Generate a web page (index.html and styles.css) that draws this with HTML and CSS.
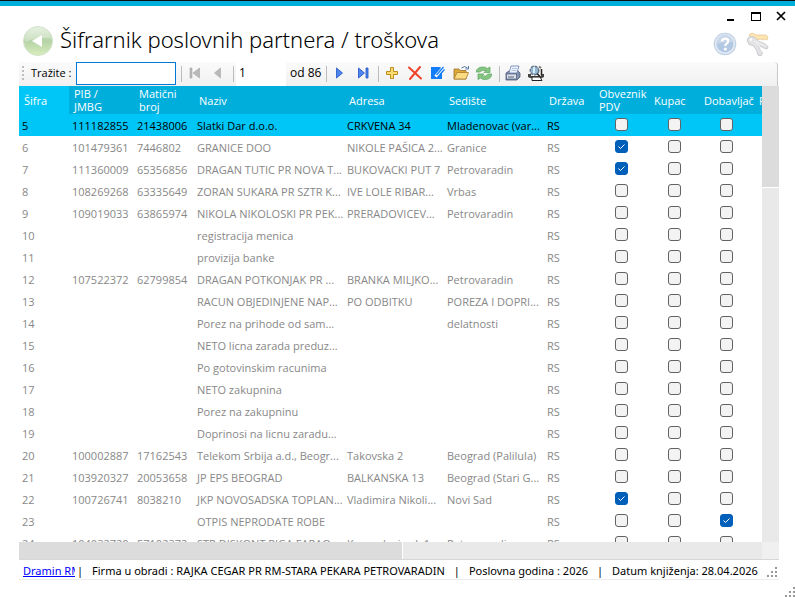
FILE: index.html
```html
<!DOCTYPE html>
<html lang="sr-Latn">

<head>
    <meta charset="UTF-8">
    <meta name="viewport" content="width=device-width, initial-scale=1.0">
    <title>Šifrarnik poslovnih partnera / troškova</title>
    <link rel="stylesheet" href="styles.css">
</head>

<body>
    <header class="title-bar">
        <button class="icon-button back" aria-label="Nazad">
            <svg width="32" height="32" viewBox="0 0 32 32">
                <defs>
                    <linearGradient id="green" x1="0" y1="0" x2="0" y2="1">
                        <stop offset="0" stop-color="#dcebd6" />
                        <stop offset="0.5" stop-color="#b5d3a6" />
                        <stop offset="1" stop-color="#d9edbd" />
                    </linearGradient>
                </defs>
                <circle cx="16" cy="16" r="14.5" fill="url(#green)" stroke="#d2e3ca" />
                <path d="M3 17a13 13 0 0 1 26-4q-12-1-26 4z" fill="#fff" opacity="0.3" />
                <path d="M20 10v12l-10-6z" fill="#fff" />
            </svg>
        </button>
        <h1>Šifrarnik poslovnih partnera / troškova</h1>
        <div class="window-side">
            <div class="window-buttons">
                <button class="icon-button" aria-label="Umanji"><svg width="12" height="12" viewBox="0 0 12 12"><path d="M2 9h7v2H2z" /></svg></button>
                <button class="icon-button" aria-label="Uvećaj"><svg width="12" height="12" viewBox="0 0 12 12"><path d="M1 2h10v9H1z M2 4v6h8V4z" fill-rule="evenodd" /></svg></button>
                <button class="icon-button" aria-label="Zatvori"><svg width="12" height="12" viewBox="0 0 12 12"><path d="M2 2l8 8M10 2l-8 8" stroke="#000" stroke-width="1.7" /></svg></button>
            </div>
            <div class="help-buttons">
                <button class="icon-button" aria-label="Pomoć">
                    <svg width="24" height="24" viewBox="0 0 24 24">
                        <circle cx="12" cy="12" r="10.7" fill="#e3ebf5" stroke="#c3d2e5" stroke-width="1.2" />
                        <circle cx="12" cy="12" r="8.5" fill="#b3c8e3" />
                        <path d="M4 12a8 8 0 0 1 16-2q-8-1-16 2z" fill="#c8d7ea" />
                        <path d="M9 9.5c0-4 6.300-3.600 6.300-.4 0 2.400-3 2.200-3 4.800" fill="none" stroke="#fff" stroke-width="2.300" />
                        <circle cx="12.300" cy="17" r="1.500" fill="#fff" />
                    </svg>
                </button>
                <button class="icon-button" aria-label="Prava pristupa">
                    <svg width="24" height="24" viewBox="0 0 24 24">
                        <path d="M3 3l3-2 4 2h10l2 2-1 3-2-1-2 1-2-1-8 1z" fill="#fce5b0" stroke="#ecd0a0" />
                        <path d="M1 8l2-3 4-.5 3 2 1 2 9 4 2 2-1 2.500-2-.5-6-3 .5 3 3 4.500-1.500 3-3-1-1.500-5-3.500-4.500-4-1z" fill="#e3e3e5" stroke="#cacace" />
                        <path d="M8 9l5 4 3 7M10 9l9 5" fill="none" stroke="#f5f5f6" />
                        <circle cx="5" cy="7.500" r="1.300" fill="#fff" />
                    </svg>
                </button>
            </div>
        </div>
    </header>

    <main class="content">
        <div class="toolbar">
            <span class="grip"></span>
            <label for="search">Tražite :</label>
            <input type="text" id="search" class="search" autofocus>
            <span class="separator"></span>
            <button aria-label="Prvi"><svg width="16" height="16" viewBox="0 0 16 16"><path d="M3 3h2v10H3zM12.500 3v10L6 8z" fill="#b9b9b9" stroke="#a5a5a5" stroke-width="0.600" /></svg></button>
            <button aria-label="Prethodni"><svg width="16" height="16" viewBox="0 0 16 16"><path d="M10.500 3v10L4.500 8z" fill="#b9b9b9" stroke="#a5a5a5" stroke-width="0.600" /></svg></button>
            <span class="separator"></span>
            <input type="text" class="page" value="1" aria-label="Strana">
            <span class="page-count">od 86</span>
            <span class="separator"></span>
            <button aria-label="Sledeći"><svg width="16" height="16" viewBox="0 0 16 16"><path d="M4.500 3v10l6-5z" fill="#4d86ee" stroke="#1e50c4" stroke-width="0.800" /></svg></button>
            <button aria-label="Poslednji"><svg width="16" height="16" viewBox="0 0 16 16"><path d="M3.500 3v10l6-5zM11 3h2v10h-2z" fill="#4d86ee" stroke="#1e50c4" stroke-width="0.800" /></svg></button>
            <span class="separator"></span>
            <button aria-label="Dodaj"><svg width="16" height="16" viewBox="0 0 16 16"><path d="M6.500 2.500h3v4h4v3h-4v4h-3v-4h-4v-3h4z" fill="#fbdc6c" stroke="#bd8c1f" /></svg></button>
            <button aria-label="Obriši"><svg width="16" height="16" viewBox="0 0 16 16"><path d="M2 2.500l12 11M13 2L3 14" stroke="#f0442c" stroke-width="2" stroke-linecap="round" /></svg></button>
            <button aria-label="Izmeni"><svg width="16" height="16" viewBox="0 0 16 16"><path d="M1 2h9l2 2v10H1z" fill="#137cf8" /><path d="M12 8l4-5v12h-4z" fill="#f6f6f6" /><path d="M5.500 11.500l7-8" stroke="#fff" stroke-width="3" /><path d="M6.500 10l7-8M10 9.500l4.500-5" stroke="#137cf8" stroke-width="1.300" /></svg></button>
            <button aria-label="Otvori"><svg width="16" height="16" viewBox="0 0 16 16"><path d="M1 14V4h5l1 1.500h6V14z" fill="#dda93c" stroke="#9f7226" stroke-width="0.800" /><path d="M1 14l3-6.500h11.500L13 14z" fill="#fbdc83" stroke="#a97b28" stroke-width="0.800" /><path d="M8.500 3q3-3 6 0M15.500 1v3h-3" fill="none" stroke="#567ba0" /></svg></button>
            <button aria-label="Osveži"><svg width="16" height="16" viewBox="0 0 16 16"><path d="M0 7q1-5 7-5 3 0 4.500 1.500L14 2v5.500H8l2-2Q6 4.500 4 7zM16 9q-1 5.500-7 5.500-3 0-4.500-1.500L2 14.500V9h6l-2 2q4 1 6-2z" fill="#86c685" stroke="#5ba65d" stroke-width="0.700" /></svg></button>
            <span class="separator"></span>
            <button aria-label="Štampaj"><svg width="16" height="16" viewBox="0 0 16 16"><path d="M1 8l3-2h9l2 2v4l-3 3H1z" fill="#8392ad" stroke="#4b5977" stroke-width="0.800" /><path d="M4 8l2-7h8l-2 7z" fill="#eef4fd" stroke="#6881ad" stroke-width="0.800" /><path d="M1.500 9h10v5h-10z" fill="#dde2ec" stroke="#56627e" stroke-width="0.800" /><path d="M3 12h6" stroke="#56627e" /><path d="M7 3.500h5M6.500 5.500h5" stroke="#a5b8da" stroke-width="0.800" /></svg></button>
            <button aria-label="Pregled štampe"><svg width="16" height="16" viewBox="0 0 16 16"><path d="M0 9h3v2h10V9h3v3l-2 1H2l-2-1z" fill="#444" /><path d="M4 12h8l2 3.500H4z" fill="#fff" stroke="#222" /><circle cx="6.500" cy="5.500" r="4.300" fill="#91b7d7" stroke="#6a7480" stroke-width="1.400" stroke-dasharray="3 1" /><path d="M6 2v6" stroke="#d8ecf9" stroke-width="2" /><path d="M9 8.500l3 3M13.500 4v6" stroke="#222" stroke-width="1.500" /><path d="M11 1.500l2 1.500" stroke="#777" stroke-width="2" /></svg></button>
        </div>

        <div class="grid">
            <div class="grid-view">
                <table>
                    <colgroup>
                        <col class="col-50">
                        <col class="col-65">
                        <col class="col-60">
                        <col class="col-150">
                        <col class="col-100">
                        <col class="col-100">
                        <col class="col-50">
                        <col class="col-55">
                        <col class="col-50">
                        <col class="col-55">
                        <col>
                    </colgroup>
                    <thead>
                        <tr>
                            <th class="sorted">Šifra</th>
                            <th>PIB /<br>JMBG</th>
                            <th>Matični<br>broj</th>
                            <th>Naziv</th>
                            <th>Adresa</th>
                            <th>Sedište</th>
                            <th>Država</th>
                            <th>Obveznik<br>PDV</th>
                            <th>Kupac</th>
                            <th>Dobavljač</th>
                            <th>P</th>
                        </tr>
                    </thead>
                    <tbody id="rows"></tbody>
                </table>
            </div>
            <div class="scroll-v"><div class="thumb"></div></div>
            <div class="scroll-h"><div class="thumb"></div></div>
            <div class="scroll-corner"></div>
        </div>

        <footer class="status">
            <a href="#">Dramin RM</a>
            <span>|</span>
            <span>Firma u obradi : RAJKA CEGAR PR RM-STARA PEKARA PETROVARADIN</span>
            <span>|</span>
            <span>Poslovna godina : 2026</span>
            <span>|</span>
            <span>Datum knjiženja: 28.04.2026</span>
            <svg class="size-grip" width="11" height="11" viewBox="0 0 11 11"><path d="M8 0h2v2H8zM4 4h2v2H4zM8 4h2v2H8zM0 8h2v2H0zM4 8h2v2H4zM8 8h2v2H8z" /></svg>
        </footer>
    </main>

    <svg class="window-grip" width="10" height="10" viewBox="0 0 10 10"><path d="M8 0h2v2H8zM4 4h2v2H4zM8 4h2v2H8zM0 8h2v2H0zM4 8h2v2H4zM8 8h2v2H8z" /></svg>

    <script>
        // sifra, pib, maticni broj, naziv, adresa, sediste, pdv, kupac, dobavljac
        const partners = [
            ['5', '111182855', '21438006', 'Slatki Dar d.o.o.', 'CRKVENA 34', 'Mladenovac (var...', 0, 0, 0],
            ['6', '101479361', '7446802', 'GRANICE DOO', 'NIKOLE PAŠICA 2...', 'Granice', 1, 0, 0],
            ['7', '111360009', '65356856', 'DRAGAN TUTIC PR NOVA T...', 'BUKOVACKI PUT 7', 'Petrovaradin', 1, 0, 0],
            ['8', '108269268', '63335649', 'ZORAN SUKARA PR SZTR K...', 'IVE LOLE RIBAR...', 'Vrbas', 0, 0, 0],
            ['9', '109019033', '63865974', 'NIKOLA NIKOLOSKI PR PEK...', 'PRERADOVICEV...', 'Petrovaradin', 0, 0, 0],
            ['10', '', '', 'registracija menica', '', '', 0, 0, 0],
            ['11', '', '', 'provizija banke', '', '', 0, 0, 0],
            ['12', '107522372', '62799854', 'DRAGAN POTKONJAK PR ...', 'BRANKA MILJKO...', 'Petrovaradin', 0, 0, 0],
            ['13', '', '', 'RACUN OBJEDINJENE NAP...', 'PO ODBITKU', 'POREZA I DOPRI...', 0, 0, 0],
            ['14', '', '', 'Porez na prihode od sam...', '', 'delatnosti', 0, 0, 0],
            ['15', '', '', 'NETO licna zarada preduz...', '', '', 0, 0, 0],
            ['16', '', '', 'Po gotovinskim racunima', '', '', 0, 0, 0],
            ['17', '', '', 'NETO zakupnina', '', '', 0, 0, 0],
            ['18', '', '', 'Porez na zakupninu', '', '', 0, 0, 0],
            ['19', '', '', 'Doprinosi na licnu zaradu...', '', '', 0, 0, 0],
            ['20', '100002887', '17162543', 'Telekom Srbija a.d., Beogr...', 'Takovska 2', 'Beograd (Palilula)', 0, 0, 0],
            ['21', '103920327', '20053658', 'JP EPS BEOGRAD', 'BALKANSKA 13', 'Beograd (Stari G...', 0, 0, 0],
            ['22', '100726741', '8038210', 'JKP NOVOSADSKA TOPLAN...', 'Vladimira Nikoli...', 'Novi Sad', 1, 0, 0],
            ['23', '', '', 'OTPIS NEPRODATE ROBE', '', '', 0, 0, 1],
            ['24', '104032720', '57102372', 'STR DISKONT PIGA FARAO...', 'Kosovska i sok 1', 'Petrovaradin', 0, 0, 0]
        ];
        const flags = ['Obveznik PDV', 'Kupac', 'Dobavljač'];

        document.getElementById('rows').innerHTML = partners.map((p, i) => {
            const texts = [...p.slice(0, 6), 'RS'].map(t => `<td>${t}</td>`).join('');
            const checks = p.slice(6).map((c, n) =>
                `<td class="check"><input type="checkbox" aria-label="${flags[n]} ${p[0]}"${c ? ' checked' : ''}></td>`).join('');
            return `<tr${i === 0 ? ' class="selected"' : ''}>${texts}${checks}<td></td></tr>`;
        }).join('');
    </script>
</body>

</html>
```
FILE: styles.css
```css
* {
    box-sizing: border-box;
}

body {
    margin: 0;
    height: 100vh;
    display: flex;
    flex-direction: column;
    padding: 0 16px 17px 19px;
    background: #fff;
    border-top: 1px solid #111;
    font-family: "Open Sans", "Noto Sans", sans-serif;
    font-size: 12px;
    color: #000;
    overflow: hidden;
}

button {
    display: flex;
    align-items: center;
    justify-content: center;
    padding: 0;
    border: none;
    background: none;
    cursor: pointer;
}

.title-bar {
    display: flex;
    align-items: flex-start;
    height: 61px;
    flex: none;
    margin: 0 -16px 0 -19px;
    padding: 4px 8px 0 22px;
    border-top: 5px solid #00aedb;
}

.back {
    margin-top: 15px;
}

h1 {
    flex: 1;
    margin: 13px 0 0 6px;
    font-family: "Noto Sans Light", "Noto Sans", "Open Sans", sans-serif;
    font-size: 22px;
    font-weight: 300;
    line-height: 32px;
    white-space: nowrap;
}

.window-side {
    display: flex;
    flex-direction: column;
    align-items: flex-end;
    gap: 10px;
}

.window-buttons {
    display: flex;
    gap: 13px;
}

.help-buttons {
    display: flex;
    gap: 9px;
    margin-right: 17px;
}

.content {
    flex: 1;
    min-height: 0;
    display: flex;
    flex-direction: column;
}

.toolbar {
    display: flex;
    align-items: stretch;
    height: 24px;
    flex: none;
    margin-right: 1px;
    padding-left: 3px;
    background: linear-gradient(#fbfbfb, #f0f0f0);
    border-right: 1px solid #c8c8c8;
    border-radius: 0 4px 0 0;
    line-height: 22px;
}

.toolbar button {
    width: 23px;
    padding-bottom: 2px;
}

.toolbar label {
    width: 45px;
    font-size: 11px;
    white-space: nowrap;
}

.toolbar input {
    font: inherit;
    border: none;
    background: #fff;
}

.toolbar .search {
    width: 100px;
    height: 23px;
    margin-right: 1px;
    padding: 0 2px;
    border: 1px solid #0078d7;
    outline: none;
}

.toolbar .page {
    width: 50px;
    margin: 0 1px;
    padding: 0 3px 2px;
}

.page-count {
    width: 35px;
    padding-left: 3px;
    white-space: nowrap;
}

.grip {
    width: 2px;
    margin: 4px 7px 4px 0;
    background: repeating-linear-gradient(#bdbdbd 0 2px, transparent 2px 4px);
}

.separator {
    width: 6px;
    margin: 4px 0;
    background: linear-gradient(#bdbdbd, #bdbdbd) 4px 0 / 1px 100% no-repeat;
}

.grid {
    flex: 1;
    min-height: 0;
    display: grid;
    grid-template-columns: 1fr 17px;
    grid-template-rows: minmax(0, 1fr) 17px;
}

.grid-view {
    overflow: hidden;
}

table {
    width: 100%;
    table-layout: fixed;
    border-collapse: collapse;
    font-size: 11px;
    color: #888;
}

.col-50 { width: 50px; }
.col-55 { width: 55px; }
.col-60 { width: 60px; }
.col-65 { width: 65px; }
.col-100 { width: 100px; }
.col-150 { width: 150px; }

th {
    height: 28px;
    padding: 0 0 0 5px;
    background: #00aedb;
    color: #fff;
    font-weight: 400;
    line-height: 13px;
    text-align: left;
    white-space: nowrap;
    overflow: hidden;
}

th.sorted {
    background: #00c6f7;
}

td {
    height: 22px;
    padding: 2px 0 0 3px;
    line-height: 20px;
    white-space: nowrap;
    overflow: hidden;
}

.selected {
    background: #00c6f7;
    color: #000;
}

td.check {
    padding: 4px 0 5px;
    text-align: center;
}

.check input {
    appearance: none;
    display: block;
    width: 13px;
    height: 13px;
    margin: 0 auto;
    border: 1px solid #626262;
    border-radius: 3px;
    background: #f3f3f3;
}

.check input:checked {
    border-color: #005fb8;
    background: #005fb8 url("data:image/svg+xml,%3Csvg xmlns='http://www.w3.org/2000/svg' viewBox='0 0 11 11'%3E%3Cpath d='M2.500 5.500l2 2 4-4' fill='none' stroke='white'/%3E%3C/svg%3E");
}

.scroll-v,
.scroll-h {
    background: #e9e9e9;
}

.scroll-v .thumb {
    height: 102px;
    background: #dcdcdc;
    border-bottom: 1px solid #fff;
}

.scroll-h .thumb {
    width: 384px;
    height: 100%;
    background: #dcdcdc;
    border-right: 1px solid #fff;
}

.scroll-corner {
    background: #f0f0f0;
}

.status {
    display: flex;
    align-items: center;
    gap: 9px;
    height: 21px;
    flex: none;
    padding: 2px 1px 0 4px;
    border-top: 1px solid #d7d7d7;
    border-bottom: 1px solid #ececec;
    font-family: "Noto Sans", "Open Sans", sans-serif;
    font-size: 11px;
    line-height: 18px;
    white-space: nowrap;
}

.status span {
    flex: none;
}

.status a {
    width: 52px;
    flex: none;
    margin-right: -7px;
    overflow: hidden;
    color: #00f;
}

.size-grip {
    margin: 4px 0 0 auto;
    flex: none;
}

.size-grip,
.window-grip {
    fill: #999;
}

.window-grip {
    position: absolute;
    right: 0;
    bottom: 0;
}
```
